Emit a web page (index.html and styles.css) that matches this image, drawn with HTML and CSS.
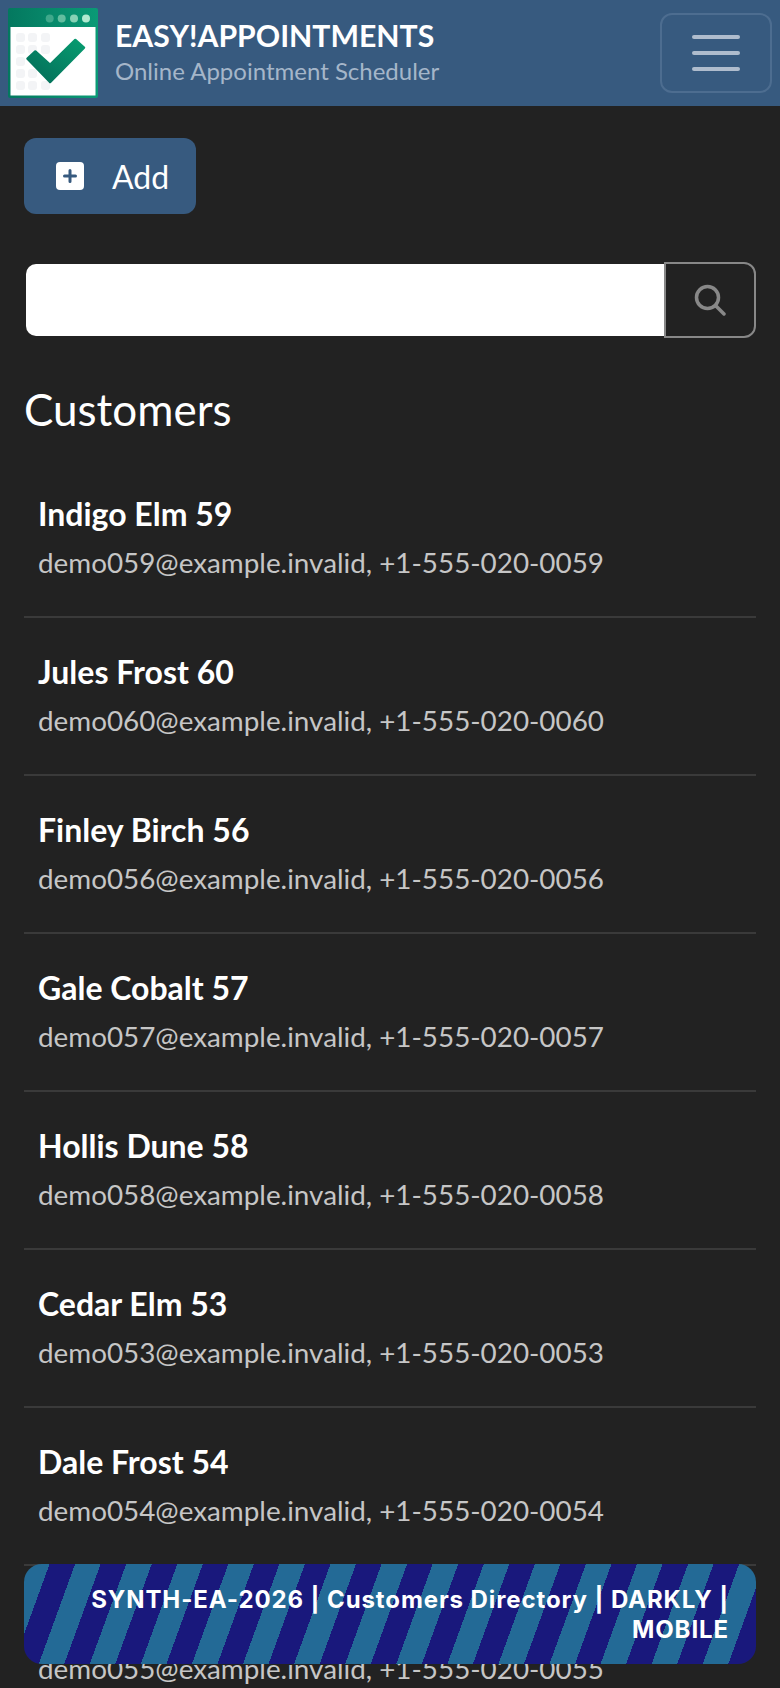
FILE: index.html
```html
<!doctype html>
<html lang=en>
  <head>
    <meta charset=utf-8 />
    <title>Customers</title>
    <link rel="stylesheet" href="styles.css">
  </head>
  <body>
    <header class="topbar">
      <svg class="logo" viewBox="0 0 90 90" aria-hidden="true">
        <defs>
          <linearGradient id="logo_head" x1="0" y1="0" x2="1" y2="0">
            <stop offset="0" stop-color="#04785f"/>
            <stop offset="1" stop-color="#0a9a76"/>
          </linearGradient>
          <linearGradient id="logo_check" x1="0" y1="1" x2="1" y2="0">
            <stop offset="0" stop-color="#046b58"/>
            <stop offset="1" stop-color="#079c70"/>
          </linearGradient>
        </defs>
        <rect width="90" height="90" rx="2" fill="url(#logo_head)"/>
        <rect x="2.500" y="19" width="85" height="68.500" fill="#fff"/>
        <g fill="#f3f4f6">
          <rect x="8" y="25" width="9" height="9" rx="3"/><rect x="20" y="25" width="9" height="9" rx="3"/><rect x="33" y="25" width="9" height="9" rx="3"/>
          <rect x="8" y="37" width="9" height="9" rx="3"/><rect x="20" y="37" width="9" height="9" rx="3"/><rect x="33" y="37" width="9" height="9" rx="3"/>
          <rect x="8" y="49" width="9" height="9" rx="3"/><rect x="8" y="61" width="9" height="9" rx="3"/><rect x="20" y="61" width="9" height="9" rx="3"/>
          <rect x="8" y="73" width="9" height="9" rx="3"/><rect x="20" y="73" width="9" height="9" rx="3"/><rect x="33" y="73" width="9" height="9" rx="3"/>
        </g>
        <circle cx="41.700" cy="10.500" r="4" fill="#3fa88b"/>
        <circle cx="53.700" cy="10.500" r="4" fill="#62bd9f"/>
        <circle cx="66" cy="10.500" r="4" fill="#86d2b5"/>
        <circle cx="78" cy="10.500" r="4" fill="#b0ead0"/>
        <path d="M19.500 50.700 L27.300 43.500 L42 56.800 L67.300 32 L76 39.700 L42 74 Z" fill="url(#logo_check)" stroke="url(#logo_check)" stroke-width="2.500" stroke-linejoin="round"/>
      </svg>
      <div class="brand">
        <div class="brand-title">EASY!APPOINTMENTS</div>
        <div class="brand-sub">Online Appointment Scheduler</div>
      </div>
      <button class="toggler" type="button" aria-label="Menu">
        <span></span><span></span><span></span>
      </button>
    </header>

    <main class="content">
      <button class="add-btn" type="button">
        <svg class="add-icon" viewBox="0 0 28 28" aria-hidden="true">
          <rect width="28" height="28" rx="4" fill="#fff"/>
          <path d="M14 8.500v11M8.500 14h11" stroke="#375a7f" stroke-width="3" stroke-linecap="round"/>
        </svg>
        Add
      </button>

      <form class="search">
        <input class="search-input" type="text">
        <button class="search-btn" type="button" aria-label="Search">
          <svg viewBox="0 0 32 32" width="32" height="32" aria-hidden="true">
            <circle cx="13.500" cy="13.500" r="11" fill="none" stroke="#888" stroke-width="3.500"/>
            <path d="M22 22l8 8" stroke="#888" stroke-width="3.500" stroke-linecap="round"/>
          </svg>
        </button>
      </form>

      <h2 class="heading">Customers</h2>

      <div class="customers">
        <div class="row"><strong>Indigo Elm 59</strong><span>demo059@example.invalid, +1-555-020-0059</span></div>
        <div class="row"><strong>Jules Frost 60</strong><span>demo060@example.invalid, +1-555-020-0060</span></div>
        <div class="row"><strong>Finley Birch 56</strong><span>demo056@example.invalid, +1-555-020-0056</span></div>
        <div class="row"><strong>Gale Cobalt 57</strong><span>demo057@example.invalid, +1-555-020-0057</span></div>
        <div class="row"><strong>Hollis Dune 58</strong><span>demo058@example.invalid, +1-555-020-0058</span></div>
        <div class="row"><strong>Cedar Elm 53</strong><span>demo053@example.invalid, +1-555-020-0053</span></div>
        <div class="row"><strong>Dale Frost 54</strong><span>demo054@example.invalid, +1-555-020-0054</span></div>
        <div class="row"><strong>Emery Glade 55</strong><span>demo055@example.invalid, +1-555-020-0055</span></div>
      </div>
    </main>

    <div class="banner">SYNTH-EA-2026 | Customers Directory | DARKLY | MOBILE</div>
  </body>
</html>
```

FILE: styles.css
```css
html, body {
  height: 1688px;
  overflow: hidden;
}

body {
  background: #222;
  color: #fff;
  font-family: Lato, 'Open Sans', sans-serif;
  margin: 0;
  padding: 0;
  position: relative;
}

.topbar {
  align-items: center;
  background: #375a7f;
  box-sizing: border-box;
  display: flex;
  height: 106px;
  padding: 0 8px;
}

.logo {
  flex: none;
  height: 90px;
  width: 90px;
}

.brand {
  margin-left: 17px;
}

.brand-title {
  font-size: 30.200px;
  font-weight: 700;
  line-height: 34px;
}

.brand-sub {
  color: #a5b6c9;
  font-size: 24px;
  line-height: 34px;
  margin-top: 2px;
}

.toggler {
  align-items: center;
  background: none;
  border: 2px solid #4d6d90;
  border-radius: 12px;
  display: flex;
  flex-direction: column;
  gap: 12px;
  height: 80px;
  justify-content: center;
  margin-left: auto;
  padding: 0;
  width: 112px;
}

.toggler span {
  background: #afbccd;
  border-radius: 2px;
  display: block;
  height: 4px;
  width: 48px;
}

.content {
  padding: 32px 24px 0;
}

.add-btn {
  align-items: center;
  background: #375a7f;
  border: 0;
  border-radius: 12px;
  color: #fff;
  display: flex;
  font-family: inherit;
  font-size: 32px;
  gap: 28px;
  height: 76px;
  padding: 0 27px 0 32px;
}

.add-icon {
  height: 28px;
  width: 28px;
}

.search {
  display: flex;
  height: 76px;
  margin-top: 48px;
}

.search-input {
  background: #fff;
  border: 0;
  border-radius: 10px 0 0 10px;
  box-sizing: border-box;
  flex: 1;
  height: 72px;
  margin: 2px 0 2px 2px;
}

.search-btn {
  align-items: center;
  background: none;
  border: 2px solid #888;
  border-radius: 0 12px 12px 0;
  display: flex;
  justify-content: center;
  padding: 0;
  width: 92px;
}

.heading {
  font-size: 44px;
  font-weight: 400;
  line-height: 50px;
  margin: 46px 0 0;
}

.customers {
  margin-top: 26px;
}

.row {
  border-bottom: 2px solid #3a3a3a;
  box-sizing: border-box;
  display: flex;
  flex-direction: column;
  gap: 12px;
  height: 158px;
  padding: 35px 14px 0;
}

.row strong {
  font-size: 32px;
  font-weight: 700;
  line-height: 38px;
}

.row span {
  color: #c6c6c6;
  font-size: 27.840px;
  line-height: 36px;
}

.banner {
  background: repeating-linear-gradient(110deg, #236a96 0, #236a96 24px, #19187c 24px, #19187c 48px);
  border-radius: 18px;
  bottom: 24px;
  box-sizing: border-box;
  color: #fff;
  font-family: Inter, sans-serif;
  font-size: 24px;
  font-weight: 700;
  height: 100px;
  left: 24px;
  letter-spacing: .9px;
  line-height: 30px;
  padding: 21px 27px 0;
  position: absolute;
  right: 24px;
  text-align: right;
}
```
